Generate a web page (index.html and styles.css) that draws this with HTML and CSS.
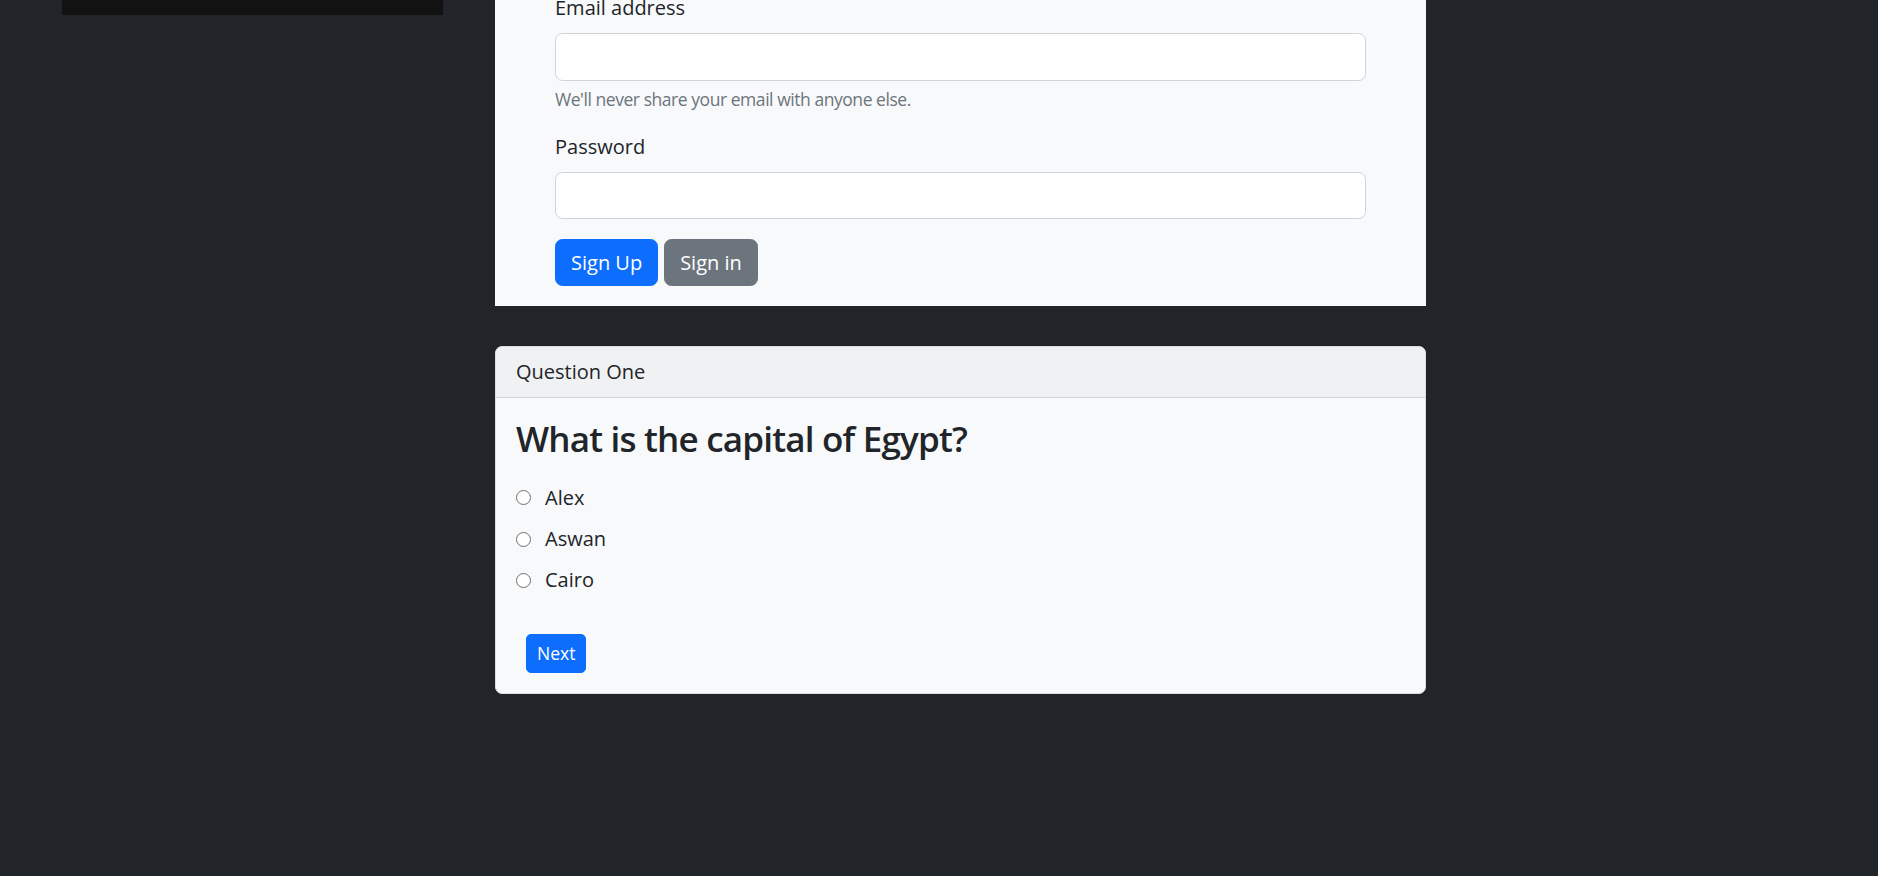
FILE: index.html
```html
<!DOCTYPE html>
<html lang="en">
<head>
<meta charset="utf-8">
<title>Quiz</title>
<link rel="stylesheet" href="styles.css">
</head>
<body>
<div class="layout">
  <aside class="sidebar"></aside>
  <main class="content">
    <form class="signup">
      <div class="field">
        <label class="field-label first" for="email">Email address</label>
        <input class="input" id="email" type="email">
        <div class="help">We'll never share your email with anyone else.</div>
      </div>
      <div class="field">
        <label class="field-label" for="password">Password</label>
        <input class="input" id="password" type="password">
      </div>
      <div class="actions">
        <button type="button" class="btn btn-primary">Sign Up</button>
        <button type="button" class="btn btn-secondary">Sign in</button>
      </div>
    </form>

    <section class="card">
      <div class="card-header">Question One</div>
      <div class="card-body">
        <h3 class="question">What is the capital of Egypt?</h3>
        <div class="options">
          <label class="option"><input type="radio" name="capital" class="radio"><span>Alex</span></label>
          <label class="option"><input type="radio" name="capital" class="radio"><span>Aswan</span></label>
          <label class="option"><input type="radio" name="capital" class="radio"><span>Cairo</span></label>
        </div>
        <button type="button" class="btn btn-primary btn-sm next">Next</button>
      </div>
    </section>
  </main>
</div>
</body>
</html>
```

FILE: styles.css
```css
html, body {
  margin: 0;
  padding: 0;
}
body {
  background: #212529;
  color: #212529;
  font-family: "Open Sans", "Noto Sans", sans-serif;
  font-size: 20px;
  line-height: 1.5;
  overflow: hidden;
}
.layout {
  display: flex;
  align-items: flex-start;
  padding-left: 62px;
  gap: 52px;
}
.sidebar {
  flex: none;
  width: 381px;
  height: 15px;
  background: #121212;
}
.content {
  flex: none;
  width: 931px;
}
.signup {
  background: #f8f9fa;
  padding: 0 60px 20px;
  margin: 0;
}
.field {
  margin-bottom: 20px;
}
.field-label {
  display: block;
  margin-bottom: 10px;
}
.field-label.first {
  margin-top: -7px;
}
.input {
  display: block;
  width: 100%;
  box-sizing: border-box;
  height: 47.5px;
  margin: 0;
  padding: 7.5px 15px;
  border: 1px solid #ced4da;
  border-radius: 7.5px;
  background: #fff;
  font: inherit;
  color: #212529;
}
.help {
  margin-top: 5px;
  font-size: 17.5px;
  line-height: 26.25px;
  letter-spacing: -0.45px;
  color: #6c757d;
}
.actions {
  display: flex;
  gap: 6px;
}
.btn {
  display: inline-block;
  margin: 0;
  padding: 7.5px 15px;
  border: 1px solid transparent;
  border-radius: 7.5px;
  font-family: inherit;
  font-size: 20px;
  line-height: 30px;
  font-weight: 400;
  color: #fff;
  cursor: pointer;
}
.btn-primary {
  background: #0d6efd;
  border-color: #0d6efd;
}
.btn-secondary {
  background: #6c757d;
  border-color: #6c757d;
}
.btn-sm {
  padding: 5px 10px;
  font-size: 17.5px;
  line-height: 26.25px;
  border-radius: 5px;
}
.card {
  margin-top: 40px;
  background: #f8f9fa;
  border: 1px solid #dcdddf;
  border-radius: 7px;
  overflow: hidden;
}
.card-header {
  padding: 10px 20px;
  background: #f0f1f2;
  border-bottom: 1px solid #d3d4d6;
  line-height: 30px;
}
.card-body {
  padding: 20px;
}
.question {
  margin: 0 0 10px;
  font-size: 35px;
  font-weight: 600;
  line-height: 42px;
  letter-spacing: -0.8px;
}
.options {
  display: flex;
  flex-direction: column;
  gap: 11.25px;
  padding-top: 12.5px;
}
.option {
  display: flex;
  align-items: center;
  gap: 14px;
  line-height: 30px;
}
.radio {
  appearance: none;
  -webkit-appearance: none;
  flex: none;
  width: 15px;
  height: 15px;
  margin: 0;
  border: 1px solid #6f6f6f;
  border-radius: 50%;
  background: #fff;
}
.next {
  margin-top: 39px;
  margin-left: 10px;
}
```
